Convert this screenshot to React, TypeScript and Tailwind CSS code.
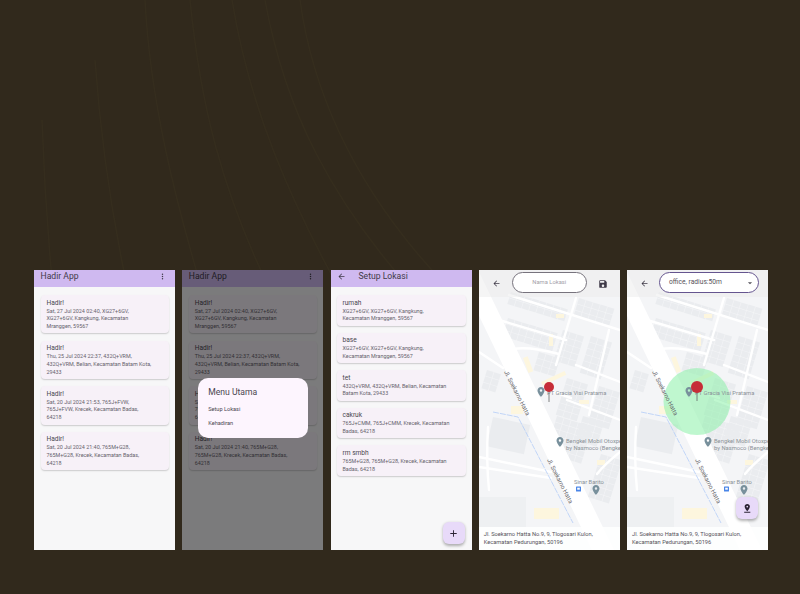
import {
  MdAdd,
  MdArrowBack,
  MdArrowDropDown,
  MdMoreVert,
  MdPinDrop,
  MdSave,
} from "react-icons/md";

const FONT = "font-['Roboto','Liberation_Sans',sans-serif]";

const attendance = [
  ["Sat, 27 Jul 2024 02:40, XG27+6GV,", "XG27+6GV, Kangkung, Kecamatan", "Mranggen, 59567"],
  ["Thu, 25 Jul 2024 22:37, 432Q+VRM,", "432Q+VRM, Belian, Kecamatan Batam Kota,", "29433"],
  ["Sat, 20 Jul 2024 21:53, 765J+FVW,", "765J+FVW, Krecek, Kecamatan Badas,", "64218"],
  ["Sat, 20 Jul 2024 21:40, 765M+G28,", "765M+G28, Krecek, Kecamatan Badas,", "64218"],
];

const places = [
  ["rumah", "XG27+6GV, XG27+6GV, Kangkung,", "Kecamatan Mranggen, 59567"],
  ["base", "XG27+6GV, XG27+6GV, Kangkung,", "Kecamatan Mranggen, 59567"],
  ["tet", "432Q+VRM, 432Q+VRM, Belian, Kecamatan", "Batam Kota, 29433"],
  ["cakruk", "765J+CMM, 765J+CMM, Krecek, Kecamatan", "Badas, 64218"],
  ["rm smbh", "765M+G28, 765M+G28, Krecek, Kecamatan", "Badas, 64218"],
];

// x, y, cols, rows of small building cells
const blocks = [
  [32, 22, 8, 2],
  [100, 28, 5, 3],
  [29, 48, 7, 3],
  [84, 60, 3, 5],
  [112, 66, 3, 6],
  [60, 82, 3, 3],
  [88, 108, 3, 6],
  [120, 116, 3, 6],
  [78, 146, 5, 6],
  [122, 184, 3, 7],
  [104, 146, 3, 4],
  [8, 100, 2, 3],
];

const streaks = [
  "M232 0 C250 110 290 200 345 300",
  "M190 0 C200 100 220 190 275 300",
  "M265 0 C285 110 330 200 420 300",
  "M300 0 C315 110 370 210 460 300",
  "M145 0 C150 100 175 200 205 300",
  "M95 60 C100 130 110 210 130 300",
  "M42 120 C44 180 48 240 54 300",
];

function Card({ title, lines }: { title: string; lines: string[] }) {
  return (
    <div className="rounded-[4px] bg-[#f7f1f8] px-[6px] pt-[3.5px] pb-[2.5px] shadow-[0_1px_1.5px_rgba(0,0,0,0.18)]">
      <div className="text-[6.6px] leading-[9px] text-[#4a4750]">{title}</div>
      {lines.map((line) => (
        <div key={line} className="whitespace-nowrap text-[5.4px] leading-[7.8px] text-[#66626c]">
          {line}
        </div>
      ))}
    </div>
  );
}

function AppBar({ title }: { title: string }) {
  return (
    <div className="flex h-[17px] shrink-0 items-start justify-between bg-[#cfb9f0] pr-[8px] pl-[6.5px] pt-[1px]">
      <span className="text-[8.6px] leading-[11px] text-[#3f3a48]">{title}</span>
      <MdMoreVert className="mt-[1px] text-[9px] text-[#3f3a48]" />
    </div>
  );
}

function Attendance() {
  return (
    <div className="flex flex-col gap-[7.2px] px-[6.5px] pt-[8px]">
      {attendance.map((lines, i) => (
        <Card key={i} title="Hadir!" lines={lines} />
      ))}
    </div>
  );
}

function Place({ x, y }: { x: number; y: number }) {
  return (
    <path
      transform={`translate(${x - 6} ${y - 6}) scale(0.5)`}
      fill="#78909c"
      d="M12 2C8.13 2 5 5.13 5 9c0 5.25 7 13 7 13s7-7.75 7-13c0-3.87-3.13-7-7-7zm0 9.5a2.5 2.5 0 1 1 0-5 2.5 2.5 0 0 1 0 5z"
    />
  );
}

function MapBase({ radius }: { radius: boolean }) {
  return (
    <svg viewBox="0 0 141 280" className="absolute inset-0 h-full w-full">
      <rect width="141" height="280" fill="#f4f5f7" />
      {blocks.map(([x, y, cols, rows], i) => (
        <g key={i} transform={`rotate(17 ${x} ${y})`}>
          {Array.from({ length: cols * rows }).map((_, n) => (
            <rect
              key={n}
              x={x + (n % cols) * 7.5}
              y={y + Math.floor(n / cols) * 6.5}
              width="7"
              height="6"
              fill="#eaecef"
            />
          ))}
        </g>
      ))}
      <rect x="14" y="147" width="38" height="30" fill="#eaecef" transform="rotate(12 14 147)" />
      <rect x="0" y="227" width="47" height="30" fill="#eef0f2" />
      <rect x="55" y="238" width="25" height="11" fill="#fdf6de" />
      <rect x="44" y="88" width="5" height="16" fill="#fdf6de" transform="rotate(-20 44 88)" />
      <rect x="70" y="64" width="4" height="12" fill="#fdf6de" />
      <rect x="77" y="44" width="8" height="4" fill="#fdf6de" />
      <rect x="32" y="136" width="12" height="8" fill="#fdf6de" />
      <rect x="100" y="130" width="10" height="4" fill="#fdf6de" />
      <rect x="118" y="190" width="8" height="5" fill="#fdf6de" />
      <rect x="62" y="112" width="26" height="4" fill="#fdf6de" transform="rotate(-25 62 112)" />
      <g stroke="#ffffff" strokeWidth="2.4" fill="none" strokeLinecap="round">
        <path d="M30 25 L141 60" />
        <path d="M20 50 L87 70" />
        <path d="M34 79 Q50 76 80 84" />
        <path d="M97 28 L77 95" />
        <path d="M130 60 L110 145" />
        <path d="M97 95 L141 112" />
        <path d="M88 130 L141 150" />
        <path d="M0 187 L72 202" />
        <path d="M0 197 L72 208" />
        <path d="M9 157 Q7 190 10 220" />
        <path d="M70 120 L92 128" />
        <path d="M118 204 Q125 195 141 182" />
        <path d="M0 82 L24 98" />
      </g>
      <path d="M-22 0 L-1 0 L135 280 L113 280 Z" fill="#ffffff" />
      <path d="M14 142 L39 147 L94 253" fill="none" stroke="#b4cdf7" strokeWidth="0.8" strokeDasharray="6 1" />
      {radius && <circle cx="70" cy="131.5" r="33.5" fill="#8bf0a8" fillOpacity="0.55" />}
      <g fontFamily="Roboto" fontSize="6" fill="#5f6368">
        <text x="25" y="102" transform="rotate(63 25 102)">Jl. Soekarno Hatta</text>
        <text x="68" y="190" transform="rotate(63 68 190)">Jl. Soekarno Hatta</text>
      </g>
      <g fontFamily="Roboto" fontSize="5.8" fill="#8a9197">
        <text x="68" y="125">PT Gracia Visi Pratama</text>
        <text x="87" y="173">Bengkel Mobil Otoxpert</text>
        <text x="87" y="180">by Nasmoco (Bengkel</text>
        <text x="95" y="214">Sinar Barito</text>
      </g>
      <Place x={62} y={122} />
      <Place x={81} y={172} />
      <Place x={117} y={220} />
      <rect x="97" y="216.5" width="5" height="5" rx="0.6" fill="#4a86e8" />
      <rect x="98.2" y="217.7" width="2.6" height="2" fill="#ffffff" />
    </svg>
  );
}

function RedPin({ big }: { big: boolean }) {
  return (
    <svg viewBox="0 0 141 280" className="absolute inset-0 h-full w-full">
      <line x1="70" y1="118" x2="70" y2={big ? 131 : 132} stroke="#666666" strokeWidth="0.8" />
      <circle cx="70" cy="117" r={big ? 6 : 5} fill="#c62d37" />
    </svg>
  );
}

function AddressBar() {
  return (
    <div className="absolute inset-x-0 bottom-0 h-[23px] bg-white/85 pl-[5px] pt-[3px] text-[5.7px] leading-[8px] text-[#55525a]">
      <div>Jl. Soekarno Hatta No.9, 9, Tlogosari Kulon,</div>
      <div>Kecamatan Pedurungan, 50196</div>
    </div>
  );
}

function Fab({ children, className }: { children: React.ReactNode; className: string }) {
  return (
    <div
      className={`absolute flex h-[22px] w-[22px] items-center justify-center rounded-[6px] bg-[#e8daf9] text-[#2a2333] shadow-[0_1.5px_3px_rgba(0,0,0,0.3)] ${className}`}
    >
      {children}
    </div>
  );
}

export default function App() {
  const phone = "relative flex h-[280px] w-[141px] shrink-0 flex-col overflow-hidden bg-[#f7f7f8]";
  return (
    <div className={`relative h-[594px] w-[800px] overflow-hidden bg-[#31291c] ${FONT}`}>
      <svg viewBox="0 0 800 594" className="absolute inset-0 h-full w-full">
        {streaks.map((d) => (
          <path key={d} d={d} fill="none" stroke="#3a3120" strokeWidth="1.5" strokeOpacity="0.5" />
        ))}
      </svg>
      <div className="relative flex gap-[7.25px] pt-[270px] pl-[34px]">
        <div className={phone}>
          <AppBar title="Hadir App" />
          <Attendance />
        </div>

        <div className={phone}>
          <AppBar title="Hadir App" />
          <Attendance />
          <div className="absolute inset-0 bg-black/50" />
          <div className="absolute top-[108px] left-[16px] h-[60px] w-[110px] rounded-[10px] bg-[#fdf5fe] pl-[10px] pt-[9px] text-[#4a4650]">
            <div className="text-[8.6px] leading-[11px]">Menu Utama</div>
            <div className="mt-[7px] text-[5.6px] leading-[8px]">Setup Lokasi</div>
            <div className="mt-[6px] text-[5.6px] leading-[8px]">Kehadiran</div>
          </div>
        </div>

        <div className={phone}>
          <div className="flex h-[17px] shrink-0 items-start gap-[13px] bg-[#cfb9f0] pl-[6px] pt-[1px] text-[#3f3a48]">
            <MdArrowBack className="mt-[1px] text-[9px]" />
            <span className="text-[8.6px] leading-[11px]">Setup Lokasi</span>
          </div>
          <div className="flex flex-col gap-[7px] px-[6px] pt-[8px]">
            {places.map(([title, ...lines]) => (
              <Card key={title} title={title} lines={lines} />
            ))}
          </div>
          <Fab className="right-[7px] bottom-[6px]">
            <MdAdd className="text-[11px]" />
          </Fab>
        </div>

        <div className={phone}>
          <MapBase radius={false} />
          <RedPin big={false} />
          <div className="absolute inset-x-0 top-0 h-[27px] bg-[#ececec]/50" />
          <MdArrowBack className="absolute top-[9px] left-[13px] text-[9px] text-[#3f3a48]" />
          <div className="absolute top-[2px] left-[33px] flex h-[21px] w-[75px] items-center justify-center rounded-full border border-[#77737d] bg-white text-[5.8px] text-[#a3a0a8]">
            Nama Lokasi
          </div>
          <MdSave className="absolute top-[8.5px] left-[119.5px] text-[10px] text-[#3f3a48]" />
          <AddressBar />
        </div>

        <div className={phone}>
          <MapBase radius={true} />
          <RedPin big={true} />
          <div className="absolute inset-x-0 top-0 h-[27px] bg-[#ececec]/50" />
          <MdArrowBack className="absolute top-[9px] left-[13px] text-[9px] text-[#3f3a48]" />
          <div className="absolute top-[2px] left-[32px] flex h-[21px] w-[100px] items-center justify-between rounded-full border border-[#65558f] bg-white pr-[3px] pl-[9px] text-[6.7px] text-[#55525a]">
            <span>office, radius:50m</span>
            <MdArrowDropDown className="text-[10px]" />
          </div>
          <AddressBar />
          <Fab className="top-[227px] left-[109px]">
            <MdPinDrop className="text-[10.5px]" />
          </Fab>
        </div>
      </div>
    </div>
  );
}
